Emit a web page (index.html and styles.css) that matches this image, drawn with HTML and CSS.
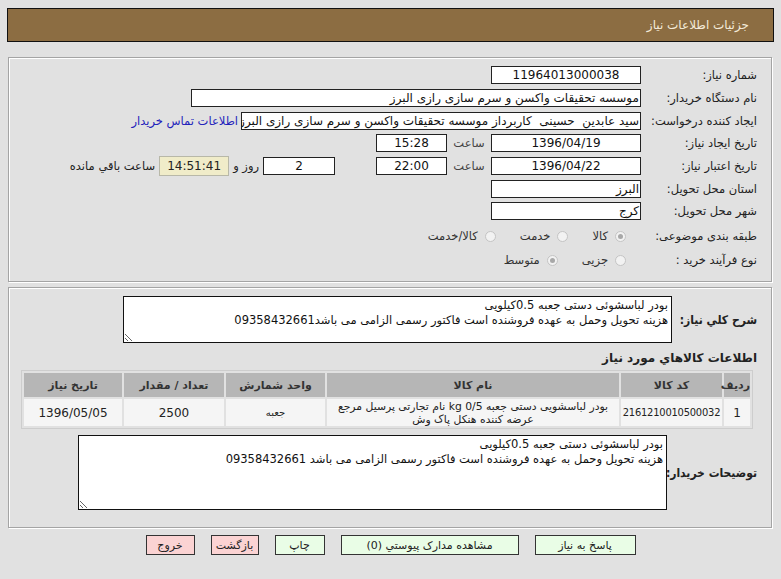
FILE: index.html
```html
<!DOCTYPE html>
<html lang="fa" dir="rtl">
<head>
<meta charset="utf-8">
<title>جزئیات اطلاعات نیاز</title>
<link rel="stylesheet" href="styles.css">
</head>
<body>
<div class="header">جزئیات اطلاعات نیاز</div>

<div class="panel p1">
  <div class="row">
    <div class="lbl">شماره نیاز:</div>
    <div class="fld w148 c">11964013000038</div>
  </div>
  <div class="row">
    <div class="lbl">نام دستگاه خریدار:</div>
    <div class="fld w448">موسسه تحقیقات واکسن و سرم سازی رازی البرز</div>
  </div>
  <div class="row">
    <div class="lbl">ایجاد کننده درخواست:</div>
    <div class="fld w398">سید عابدین&nbsp; حسینی&nbsp; کاربرداز موسسه تحقیقات واکسن و سرم سازی رازی البرز</div>
    <a class="link" href="#">اطلاعات تماس خریدار</a>
  </div>
  <div class="row">
    <div class="lbl">تاریخ ایجاد نیاز:</div>
    <div class="fld w148 c">1396/04/19</div>
    <div class="sa">ساعت</div>
    <div class="fld w69 c">15:28</div>
  </div>
  <div class="row">
    <div class="lbl">تاریخ اعتبار نیاز:</div>
    <div class="fld w148 c">1396/04/22</div>
    <div class="sa">ساعت</div>
    <div class="fld w69 c">22:00</div>
    <div class="fld w70 c days">2</div>
    <div class="txt">روز و</div>
    <div class="remain">14:51:41</div>
    <div class="txt">ساعت باقي مانده</div>
  </div>
  <div class="row">
    <div class="lbl">استان محل تحویل:</div>
    <div class="fld w148">البرز</div>
  </div>
  <div class="row">
    <div class="lbl">شهر محل تحویل:</div>
    <div class="fld w148">کرج</div>
  </div>
  <div class="row rrow1">
    <div class="lbl">طبقه بندی موضوعی:</div>
    <div class="radios">
      <span class="opt"><span class="rd on"></span>کالا</span>
      <span class="opt"><span class="rd"></span>خدمت</span>
      <span class="opt"><span class="rd"></span>کالا/خدمت</span>
    </div>
  </div>
  <div class="row rrow2">
    <div class="lbl">نوع فرآیند خرید :</div>
    <div class="radios">
      <span class="opt"><span class="rd"></span>جزیی</span>
      <span class="opt"><span class="rd on"></span>متوسط</span>
    </div>
  </div>
</div>

<div class="panel p2">
  <div class="arow">
    <div class="blbl w85">شرح کلي نیاز:</div>
    <textarea class="ta ta1" readonly>بودر لباسشوئی دستی جعبه 0.5کیلویی
هزینه تحویل وحمل به عهده فروشنده است فاکتور رسمی الزامی می باشد09358432661</textarea>
  </div>
  <div class="stitle">اطلاعات کالاهاي مورد نیاز</div>
  <table class="goods">
    <colgroup>
      <col class="c1"><col class="c2"><col class="c3"><col class="c4"><col class="c5"><col class="c6">
    </colgroup>
    <thead>
      <tr>
        <th>ردیف</th>
        <th>کد کالا</th>
        <th>نام کالا</th>
        <th>واحد شمارش</th>
        <th>تعداد / مقدار</th>
        <th>تاریخ نیاز</th>
      </tr>
    </thead>
    <tbody>
      <tr>
        <td>1</td>
        <td class="code">2161210010500032</td>
        <td class="name">بودر لباسشویی دستی جعبه 0/5 kg نام تجارتی پرسیل مرجع عرضه کننده هنکل پاک وش</td>
        <td class="small">جعبه</td>
        <td>2500</td>
        <td>1396/05/05</td>
      </tr>
    </tbody>
  </table>
  <div class="arow brow">
    <div class="blbl w90">توضیحات خریدار:</div>
    <textarea class="ta ta2" readonly>بودر لباسشوئی دستی جعبه 0.5کیلویی
هزینه تحویل وحمل به عهده فروشنده است فاکتور رسمی الزامی می باشد 09358432661</textarea>
  </div>
</div>

<div class="buttons">
  <button class="btn green b1">پاسخ به نیاز</button>
  <button class="btn green b2">مشاهده مدارک پیوستي (0)</button>
  <button class="btn green b3">چاپ</button>
  <button class="btn pink b4">بازگشت</button>
  <button class="btn pink b5">خروج</button>
</div>
</body>
</html>
```
FILE: styles.css
```css
html, body {
  margin: 0;
  padding: 0;
  background: #e1e1e1;
}
body {
  font-family: "DejaVu Sans", sans-serif;
  font-size: 11.5px;
  color: #222;
  direction: rtl;
  width: 781px;
  height: 579px;
  overflow: hidden;
}
.header {
  margin: 8px 7px 0 7px;
  height: 32px;
  background: #8c6d42;
  border: 1px solid #111;
  color: #f3ead9;
  font-size: 12px;
  line-height: 32px;
  padding-right: 24px;
}
.panel {
  margin: 0 9px 0 8px;
  border: 1px solid #a4a4a4;
  box-shadow: 1px 1px 0 #fff, inset 1px 1px 0 #fff;
}
.p1 {
  margin-top: 15px;
  height: 217px;
  padding: 6px 14px 0 0;
  box-sizing: content-box;
}
.row {
  display: flex;
  align-items: center;
  height: 22.7px;
}
.lbl {
  width: 116px;
  flex: none;
  white-space: nowrap;
}
.fld {
  height: 16px;
  line-height: 16px;
  border: 1px solid #222;
  background: #fff;
  font-size: 12px;
  color: #111;
  padding: 0 1px;
  box-sizing: content-box;
  white-space: nowrap;
  overflow: hidden;
  flex: none;
}
.c { text-align: center; }
.w148 { width: 146px; }
.w448 { width: 446px; }
.w398 { width: 396px; }
.w69 { width: 67px; }
.w70 { width: 68px; }
.link {
  color: #2222bb;
  text-decoration: none;
  font-size: 11.5px;
  margin-right: 3px;
  white-space: nowrap;
}
.sa {
  width: 44px;
  text-align: center;
  color: #444;
  flex: none;
}
.days { margin-right: 41px; }
.txt {
  margin: 0 4px;
  white-space: nowrap;
}
.remain {
  width: 68px;
  height: 18px;
  line-height: 18px;
  text-align: center;
  background: #f0ecc9;
  border: 1px solid #b8b8a8;
  font-size: 12px;
  color: #222;
}
.rrow1 { height: 25px; margin-top: 1px; }
.rrow2 { height: 23px; }
.radios {
  display: flex;
  align-items: center;
  margin-right: 15px;
  gap: 24px;
  color: #333;
}
.opt {
  display: flex;
  align-items: center;
  gap: 7px;
}
.rd {
  width: 11px;
  height: 11px;
  border-radius: 50%;
  border: 1px solid #c4c4c4;
  background: #f2f2f2;
  box-sizing: border-box;
  position: relative;
}
.rd.on::after {
  content: "";
  position: absolute;
  left: 2px;
  top: 2px;
  width: 5px;
  height: 5px;
  border-radius: 50%;
  background: #a8a8a8;
}
.p2 {
  margin-top: 5px;
  height: 231px;
  padding: 8px 14px 0 0;
  box-sizing: content-box;
}
.arow {
  display: flex;
  align-items: center;
}
.blbl {
  flex: none;
  font-family: "DejaVu Sans Condensed", "DejaVu Sans", sans-serif;
  font-weight: bold;
  font-size: 12px;
  color: #222;
  white-space: nowrap;
}
.w85 { width: 85px; }
.w90 { width: 90px; }
.ta {
  font-family: "DejaVu Sans", sans-serif;
  font-size: 11.5px;
  color: #111;
  border: 1px solid #111;
  background: #fff;
  direction: rtl;
  padding: 1px 3px;
  box-sizing: border-box;
  margin: 0;
  overflow: hidden;
  line-height: 15px;
  flex: none;
}
.ta1 { width: 549px; height: 47px; }
.ta2 { width: 589px; height: 75px; }
.stitle {
  font-weight: bold;
  font-size: 12px;
  margin-top: 7px;
  height: 20px;
  line-height: 16px;
}
.goods {
  border-collapse: separate;
  border-spacing: 2px;
  border: 1px solid #cdcdcd;
  margin-right: 4px;
  width: 730px;
  table-layout: fixed;
  font-size: 11px;
}
.goods th {
  background: #b6b6b6;
  color: #333;
  font-weight: bold;
  height: 24px;
  padding: 0;
}
.goods td {
  background: #f5f5f5;
  text-align: center;
  height: 27px;
  padding: 0;
  color: #222;
  font-size: 12px;
}
.goods td.name {
  font-size: 10.8px;
  line-height: 13px;
}
.goods td.code {
  font-family: "DejaVu Sans Condensed", "DejaVu Sans", sans-serif;
  font-size: 11px;
  letter-spacing: -0.2px;
}
.goods td.small { font-size: 10px; }
.c1 { width: 26px; }
.c2 { width: 101px; }
.c3 { width: 292px; }
.c4 { width: 99px; }
.c5 { width: 100px; }
.c6 { width: 98px; }
.brow { margin-top: 6px; }
.buttons {
  display: flex;
  justify-content: center;
  gap: 16px;
  margin-top: 7px;
}
.btn {
  font-family: "DejaVu Sans", sans-serif;
  font-size: 11px;
  height: 20px;
  padding: 0;
  border: 1px solid #333;
  color: #222;
}
.green { background: #e9fde6; }
.pink { background: #fbd3d3; }
.b1 { width: 101px; }
.b2 { width: 178px; }
.b3 { width: 50px; }
.b4 { width: 48px; }
.b5 { width: 49px; }
```
